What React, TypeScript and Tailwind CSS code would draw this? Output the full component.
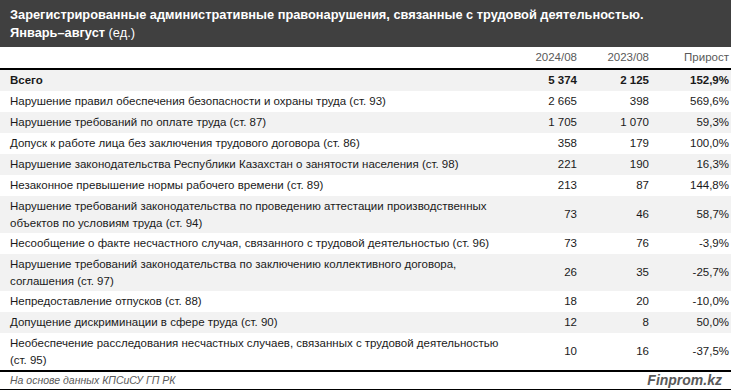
const rows: { label: string; a: string; b: string; c: string; tall?: boolean }[] = [
  { label: "Нарушение правил обеспечения безопасности и охраны труда (ст. 93)", a: "2 665", b: "398", c: "569,6%" },
  { label: "Нарушение требований по оплате труда (ст. 87)", a: "1 705", b: "1 070", c: "59,3%" },
  { label: "Допуск к работе лица без заключения трудового договора (ст. 86)", a: "358", b: "179", c: "100,0%" },
  { label: "Нарушение законодательства Республики Казахстан о занятости населения (ст. 98)", a: "221", b: "190", c: "16,3%" },
  { label: "Незаконное превышение нормы рабочего времени (ст. 89)", a: "213", b: "87", c: "144,8%" },
  {
    label: "Нарушение требований законодательства по проведению аттестации производственных объектов по условиям труда (ст. 94)",
    a: "73",
    b: "46",
    c: "58,7%",
    tall: true,
  },
  { label: "Несообщение о факте несчастного случая, связанного с трудовой деятельностью (ст. 96)", a: "73", b: "76", c: "-3,9%" },
  {
    label: "Нарушение требований законодательства по заключению коллективного договора, соглашения (ст. 97)",
    a: "26",
    b: "35",
    c: "-25,7%",
    tall: true,
  },
  { label: "Непредоставление отпусков (ст. 88)", a: "18", b: "20", c: "-10,0%" },
  { label: "Допущение дискриминации в сфере труда (ст. 90)", a: "12", b: "8", c: "50,0%" },
  {
    label: "Необеспечение расследования несчастных случаев, связанных с трудовой деятельностью (ст. 95)",
    a: "10",
    b: "16",
    c: "-37,5%",
    tall: true,
  },
];

const font = { fontFamily: '"Liberation Sans Narrow", "Liberation Sans", sans-serif' };

export default function App() {
  return (
    <div className="w-[731px] h-[391px] bg-white text-[11.5px] text-[#1a1a1a] overflow-hidden" style={font}>
      {/* title */}
      <div className="h-[47px] bg-[#404040] text-white px-[10px] pt-[6px] leading-[18px] text-[12.8px]">
        <div className="font-bold">Зарегистрированные административные правонарушения, связанные с трудовой деятельностью.</div>
        <div>
          <span className="font-bold">Январь–август</span> (ед.)
        </div>
      </div>

      {/* column heads */}
      <div className="h-[21px] flex items-center pl-[10px] pr-[2px] pt-[1px] text-[#595959]">
        <div className="flex-1" />
        <div className="w-[72px] text-right">2024/08</div>
        <div className="w-[72px] text-right">2023/08</div>
        <div className="w-[80px] text-right">Прирост</div>
      </div>
      <div className="h-[2px] bg-black" />

      <div className="h-[21px] flex items-center pl-[10px] pr-[2px] bg-[#f2f2f2] font-bold">
        <div className="flex-1">Всего</div>
        <div className="w-[72px] text-right">5 374</div>
        <div className="w-[72px] text-right">2 125</div>
        <div className="w-[80px] text-right">152,9%</div>
      </div>

      {rows.map((r, i) => (
        <div
          key={i}
          className={`flex items-center pl-[10px] pr-[2px] leading-[17px] ${r.tall ? "h-[37px]" : "h-[21px]"} ${
            i % 2 === 1 ? "bg-[#f2f2f2]" : ""
          }`}
        >
          <div className="flex-1 pr-[3px]">{r.label}</div>
          <div className="w-[72px] text-right">{r.a}</div>
          <div className="w-[72px] text-right">{r.b}</div>
          <div className="w-[80px] text-right">{r.c}</div>
        </div>
      ))}

      {/* footer */}
      <div className="h-[2px] bg-black" />
      <div className="h-[18px] flex items-center justify-between pl-[10px] pr-[9px] border-b border-black text-[#595959] italic">
        <span className="text-[10.5px]">На основе данных КПСиСУ ГП РК</span>
        <span className="font-bold text-[14px]">Finprom.kz</span>
      </div>
    </div>
  );
}
